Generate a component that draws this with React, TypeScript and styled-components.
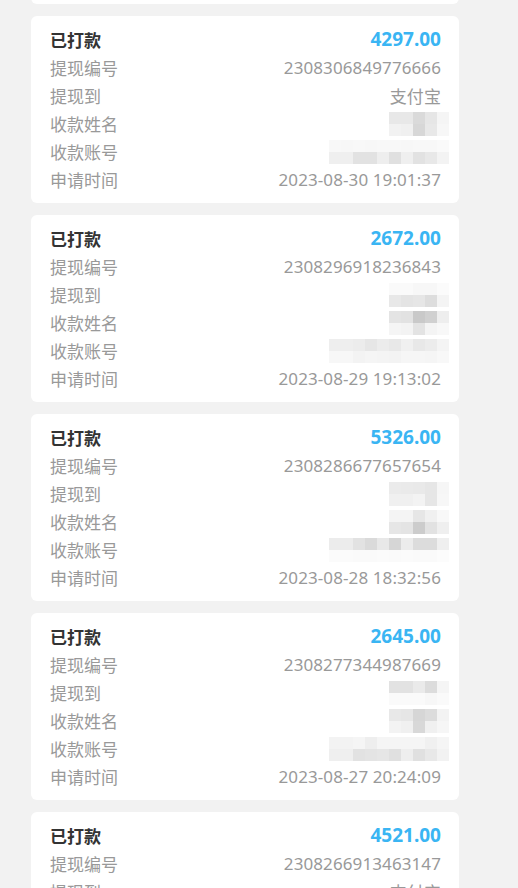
import * as React from "react";
import styled, { createGlobalStyle } from "styled-components";

const GlobalStyle = createGlobalStyle`
  html, body {
    margin: 0;
    padding: 0;
    background: #f2f2f2;
  }
  body {
    font-family: "Noto Sans", "Noto Sans CJK SC", sans-serif;
  }
`;

const Page = styled.div`
  height: 888px;
  overflow-y: auto;
  scrollbar-width: none;
  background: #f2f2f2;
  &::-webkit-scrollbar {
    display: none;
  }
`;

const List = styled.div`
  display: flex;
  flex-direction: column;
  gap: 12px;
  width: 428px;
  padding: 0 0 12px 31px;
`;

const Card = styled.div`
  background: #ffffff;
  border-radius: 6px;
  padding: 9px 18px 10px 19px;
`;

const Row = styled.div`
  display: flex;
  justify-content: space-between;
  align-items: center;
  height: 28px;
  font-size: 17px;
  color: #999999;
  white-space: nowrap;
`;

const Status = styled.span`
  font-size: 17px;
  font-weight: 700;
  color: #333333;
`;

const Amount = styled.span`
  font-size: 19px;
  font-weight: 700;
  color: #3ab5f3;
`;

const Value = styled.span`
  color: #999999;
  letter-spacing: 0.1px;
`;

const Mosaic = styled.div<{ $cols: number }>`
  display: grid;
  grid-template-columns: repeat(${(p) => p.$cols}, 12px);
  grid-auto-rows: 12px;
  margin: 2px -8px 0 0;
`;

const Cell = styled.div<{ $tone: string }>`
  background: #${(p) => p.$tone}${(p) => p.$tone}${(p) => p.$tone};
`;

type Blur = string[][];

type Record = {
  amount: string;
  no: string;
  to: string | Blur;
  name: Blur;
  account: Blur;
  time: string;
};

const records: Record[] = [
  {
    amount: "3810.00",
    no: "2308316502217730",
    to: "支付宝",
    name: [
      ["ea", "e6", "dd", "e8", "f4"],
      ["f2", "ee", "da", "ea", "f6"],
    ],
    account: [
      ["f8", "f8", "f6", "f7", "f8", "f6", "f8", "f7", "f8", "fa"],
      ["ee", "ee", "e2", "e3", "ee", "e0", "ee", "e2", "e8", "f3"],
    ],
    time: "2023-08-31 18:42:11",
  },
  {
    amount: "4297.00",
    no: "2308306849776666",
    to: "支付宝",
    name: [
      ["e8", "e8", "da", "e6", "f5"],
      ["f2", "f0", "d7", "e8", "f7"],
    ],
    account: [
      ["f8", "f7", "f8", "f7", "f8", "f8", "f7", "f8", "f8", "fa"],
      ["ef", "ef", "e2", "e2", "ee", "e0", "ef", "e2", "e8", "f3"],
    ],
    time: "2023-08-30 19:01:37",
  },
  {
    amount: "2672.00",
    no: "2308296918236843",
    to: [
      ["fa", "fa", "f7", "f7", "fb"],
      ["e8", "e4", "e6", "dd", "f4"],
    ],
    name: [
      ["e4", "e2", "c9", "d0", "ee"],
      ["f5", "f3", "e3", "f4", "f8"],
    ],
    account: [
      ["ee", "ee", "ec", "e6", "ec", "e8", "f0", "e8", "ec", "f4"],
      ["f7", "f7", "f3", "f5", "f4", "f3", "f6", "f6", "f5", "f8"],
    ],
    time: "2023-08-29 19:13:02",
  },
  {
    amount: "5326.00",
    no: "2308286677657654",
    to: [
      ["eb", "ea", "e9", "e6", "f6"],
      ["f0", "f0", "f3", "e6", "f7"],
    ],
    name: [
      ["f4", "f4", "e6", "f0", "f8"],
      ["e6", "e4", "cc", "e2", "ef"],
    ],
    account: [
      ["ec", "ec", "e2", "da", "e8", "d6", "ec", "dc", "dc", "ef"],
      ["fb", "fb", "fa", "fa", "fb", "fa", "fb", "fa", "fa", "fc"],
    ],
    time: "2023-08-28 18:32:56",
  },
  {
    amount: "2645.00",
    no: "2308277344987669",
    to: [
      ["e2", "e2", "ea", "dc", "f5"],
      ["fa", "fa", "fa", "f7", "fa"],
    ],
    name: [
      ["e8", "e6", "d6", "dc", "f3"],
      ["f3", "f0", "d8", "f0", "f6"],
    ],
    account: [
      ["f3", "f3", "f5", "ee", "f5", "f5", "f5", "f5", "f0", "f5"],
      ["ef", "ef", "e2", "e4", "e6", "e0", "ee", "e0", "e8", "f2"],
    ],
    time: "2023-08-27 20:24:09",
  },
  {
    amount: "4521.00",
    no: "2308266913463147",
    to: "支付宝",
    name: [
      ["e8", "e6", "d8", "e4", "f3"],
      ["f2", "ef", "dc", "ec", "f6"],
    ],
    account: [
      ["f6", "f6", "f3", "f4", "f6", "f3", "f6", "f4", "f5", "f8"],
      ["ee", "ee", "e2", "e4", "ec", "e0", "ee", "e2", "e8", "f2"],
    ],
    time: "2023-08-26 17:50:44",
  },
];

function Blurred({ data }: { data: Blur }) {
  return (
    <Mosaic $cols={data[0].length}>
      {data.flatMap((line, r) =>
        line.map((tone, c) => <Cell key={`${r}-${c}`} $tone={tone} />)
      )}
    </Mosaic>
  );
}

function Field({ value }: { value: string | Blur }) {
  return typeof value === "string" ? <Value>{value}</Value> : <Blurred data={value} />;
}

function RecordCard({ item }: { item: Record }) {
  return (
    <Card>
      <Row>
        <Status>已打款</Status>
        <Amount>{item.amount}</Amount>
      </Row>
      <Row>
        <span>提现编号</span>
        <Value>{item.no}</Value>
      </Row>
      <Row>
        <span>提现到</span>
        <Field value={item.to} />
      </Row>
      <Row>
        <span>收款姓名</span>
        <Blurred data={item.name} />
      </Row>
      <Row>
        <span>收款账号</span>
        <Blurred data={item.account} />
      </Row>
      <Row>
        <span>申请时间</span>
        <Value>{item.time}</Value>
      </Row>
    </Card>
  );
}

export default function App() {
  const pageRef = React.useRef<HTMLDivElement>(null);

  React.useLayoutEffect(() => {
    if (pageRef.current) pageRef.current.scrollTop = 183;
  }, []);

  return (
    <>
      <GlobalStyle />
      <Page ref={pageRef}>
        <List>
          {records.map((item) => (
            <RecordCard key={item.no} item={item} />
          ))}
        </List>
      </Page>
    </>
  );
}
